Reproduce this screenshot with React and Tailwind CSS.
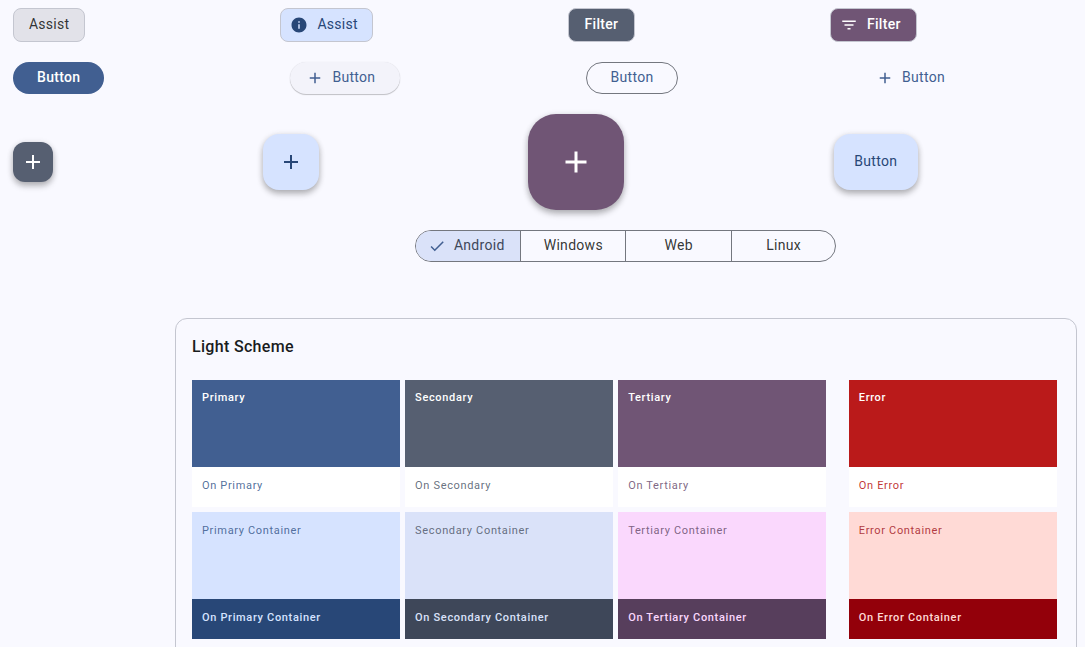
import React from "react";

const PLUS = "M19 13h-6v6h-2v-6H5v-2h6V5h2v6h6v2z";
const INFO = "M12 2C6.48 2 2 6.48 2 12s4.48 10 10 10 10-4.48 10-10S17.52 2 12 2zm1 15h-2v-6h2v6zm0-8h-2V7h2v2z";
const FILTER = "M10 18h4v-2h-4v2zM3 6v2h18V6H3zm3 7h12v-2H6v2z";
const CHECK = "M9 16.17L4.83 12l-1.42 1.41L9 19 21 7l-1.41-1.41z";

function Icon({ d, className }) {
  return (
    <svg viewBox="0 0 24 24" fill="currentColor" className={`shrink-0 ${className}`} aria-hidden="true">
      <path d={d} />
    </svg>
  );
}

const schemes = [
  {
    name: "Primary",
    gap: "",
    main: "bg-[#415f91] text-white",
    on: "bg-white text-[#415f91]/90",
    container: "bg-[#d6e3ff] text-[#415f91]/90",
    onContainer: "bg-[#284777] text-[#d6e3ff]",
  },
  {
    name: "Secondary",
    gap: "ml-[4.8px]",
    main: "bg-[#565f71] text-white",
    on: "bg-white text-[#565f71]/90",
    container: "bg-[#dae2f9] text-[#565f71]/90",
    onContainer: "bg-[#3e4759] text-[#dae2f9]",
  },
  {
    name: "Tertiary",
    gap: "ml-[4.8px]",
    main: "bg-[#705575] text-white",
    on: "bg-white text-[#705575]/90",
    container: "bg-[#fad8fd] text-[#705575]/90",
    onContainer: "bg-[#573e5c] text-[#fad8fd]",
  },
  {
    name: "Error",
    gap: "ml-[22.3px]",
    main: "bg-[#ba1a1a] text-white",
    on: "bg-white text-[#ba1a1a]/90",
    container: "bg-[#ffdad6] text-[#a8272e]/90",
    onContainer: "bg-[#93000a] text-[#ffdad6]",
  },
];

function Swatches({ scheme }) {
  return (
    <div className={`w-[208.3px] shrink-0 text-[11px] leading-4 tracking-[0.66px] whitespace-nowrap ${scheme.gap}`}>
      <div className={`h-[87px] px-2.5 pt-2.5 font-medium ${scheme.main}`}>{scheme.name}</div>
      <div className={`h-10 px-2.5 pt-[11px] ${scheme.on}`}>On {scheme.name}</div>
      <div className={`mt-[5px] h-[87px] px-2.5 pt-[11px] ${scheme.container}`}>{scheme.name} Container</div>
      <div className={`h-10 px-2.5 pt-[11px] font-medium ${scheme.onContainer}`}>On {scheme.name} Container</div>
    </div>
  );
}

const label = "text-[14px] leading-5 tracking-[0.3px] whitespace-nowrap";
const fabShadow = "shadow-[0_4px_6px_rgba(0,0,0,0.24),0_1px_6px_rgba(0,0,0,0.12)]";

export default function App() {
  return (
    <main className="h-[647px] w-[1085px] overflow-hidden bg-[#f9f9ff] font-['Roboto',sans-serif] text-[#191c20]">
      <div className="flex h-[42px] items-start pt-2">
        <button className={`ml-[13px] flex h-[34px] w-[72.4px] items-start justify-center rounded-lg border border-[#c4c6d0] bg-[#e2e2e9] pt-[5px] text-[#191c20]/90 ${label}`}>Assist</button>
        <button className={`ml-[195px] flex h-[34px] w-[92.6px] items-start rounded-lg border border-[#c4c6d0] bg-[#d6e3ff] pt-[5px] pl-[9px] text-[#284777] ${label}`}>
          <Icon d={INFO} className="mt-[2px] mr-[9px] h-[18px] w-[18px]" />
          Assist
        </button>
        <button className={`ml-[195px] flex h-[34px] w-[67px] items-start justify-center rounded-lg border border-[#c4c6d0] bg-[#565f71] pt-[5px] font-medium text-white ${label}`}>Filter</button>
        <button className={`ml-[195px] flex h-[34px] w-[87px] items-start rounded-lg border border-[#c4c6d0] bg-[#705575] pt-[5px] pl-[9px] font-medium text-white ${label}`}>
          <Icon d={FILTER} className="mt-[2px] mr-[9px] h-[18px] w-[18px]" />
          Filter
        </button>
      </div>

      <div className="mt-5 flex h-8 items-start">
        <button className={`ml-[13px] flex h-8 w-[91.4px] justify-center rounded-full bg-[#415f91] pt-[5px] font-medium text-white ${label}`}>Button</button>
        <button className={`ml-[186px] flex h-8 w-[110px] items-start rounded-full bg-[#f3f3fa] pt-[5px] pl-4 text-[#415f91] shadow-[0_1px_1px_rgba(0,0,0,0.22),0_0_1px_rgba(0,0,0,0.12)] ${label}`}>
          <Icon d={PLUS} className="mt-[2px] mr-2 h-[18px] w-[18px]" />
          Button
        </button>
        <button className={`ml-[185.6px] flex h-8 w-[92px] justify-center rounded-full border border-[#74777f] pt-1 text-[#415f91] ${label}`}>Button</button>
        <button className={`ml-[182px] flex h-8 items-start pt-[5px] pl-4 text-[#415f91] ${label}`}>
          <Icon d={PLUS} className="mt-[2px] mr-2 h-[18px] w-[18px]" />
          Button
        </button>
      </div>

      <div className="mt-5 flex h-24 items-center">
        <button className={`ml-[13px] flex h-10 w-10 items-center justify-center rounded-xl bg-[#565f71] text-white ${fabShadow}`}>
          <Icon d={PLUS} className="h-6 w-6" />
        </button>
        <button className={`ml-[209.6px] flex h-14 w-14 items-center justify-center rounded-2xl bg-[#d6e3ff] text-[#284777] ${fabShadow}`}>
          <Icon d={PLUS} className="h-6 w-6" />
        </button>
        <button className={`ml-[209.7px] flex h-24 w-24 items-center justify-center rounded-[28px] bg-[#705575] text-white ${fabShadow}`}>
          <Icon d={PLUS} className="h-9 w-9" />
        </button>
        <button className={`ml-[209.7px] flex h-14 w-[83.6px] justify-center rounded-2xl bg-[#d6e3ff] pt-[17px] text-[#284777] ${label} ${fabShadow}`}>Button</button>
      </div>

      <div className="mt-5 ml-[415.4px] flex h-8 w-[421px] overflow-hidden rounded-full border border-[#74777f]">
        <button className={`flex w-[104.8px] items-start border-r border-[#74777f] bg-[#dae2f9] pt-1 pl-[11.5px] text-[#3e4759] ${label}`}>
          <Icon d={CHECK} className="mt-0.5 mr-2 h-[18px] w-[18px] text-[#415f91]" />
          Android
        </button>
        <button className={`flex w-[105.3px] justify-center border-r border-[#74777f] pt-1 text-[#191c20]/90 ${label}`}>Windows</button>
        <button className={`flex w-[105.3px] justify-center border-r border-[#74777f] pt-1 text-[#191c20]/90 ${label}`}>Web</button>
        <button className={`flex flex-1 justify-center pt-1 text-[#191c20]/90 ${label}`}>Linux</button>
      </div>

      <section className="mt-14 ml-[175px] h-[400px] w-[902px] rounded-xl border border-[#c4c6d0] px-4 pt-4">
        <h2 className="h-[45px] text-[16px] leading-6 font-medium tracking-[0.32px]">Light Scheme</h2>
        <div className="flex">
          {schemes.map((scheme) => (
            <Swatches key={scheme.name} scheme={scheme} />
          ))}
        </div>
      </section>
    </main>
  );
}
